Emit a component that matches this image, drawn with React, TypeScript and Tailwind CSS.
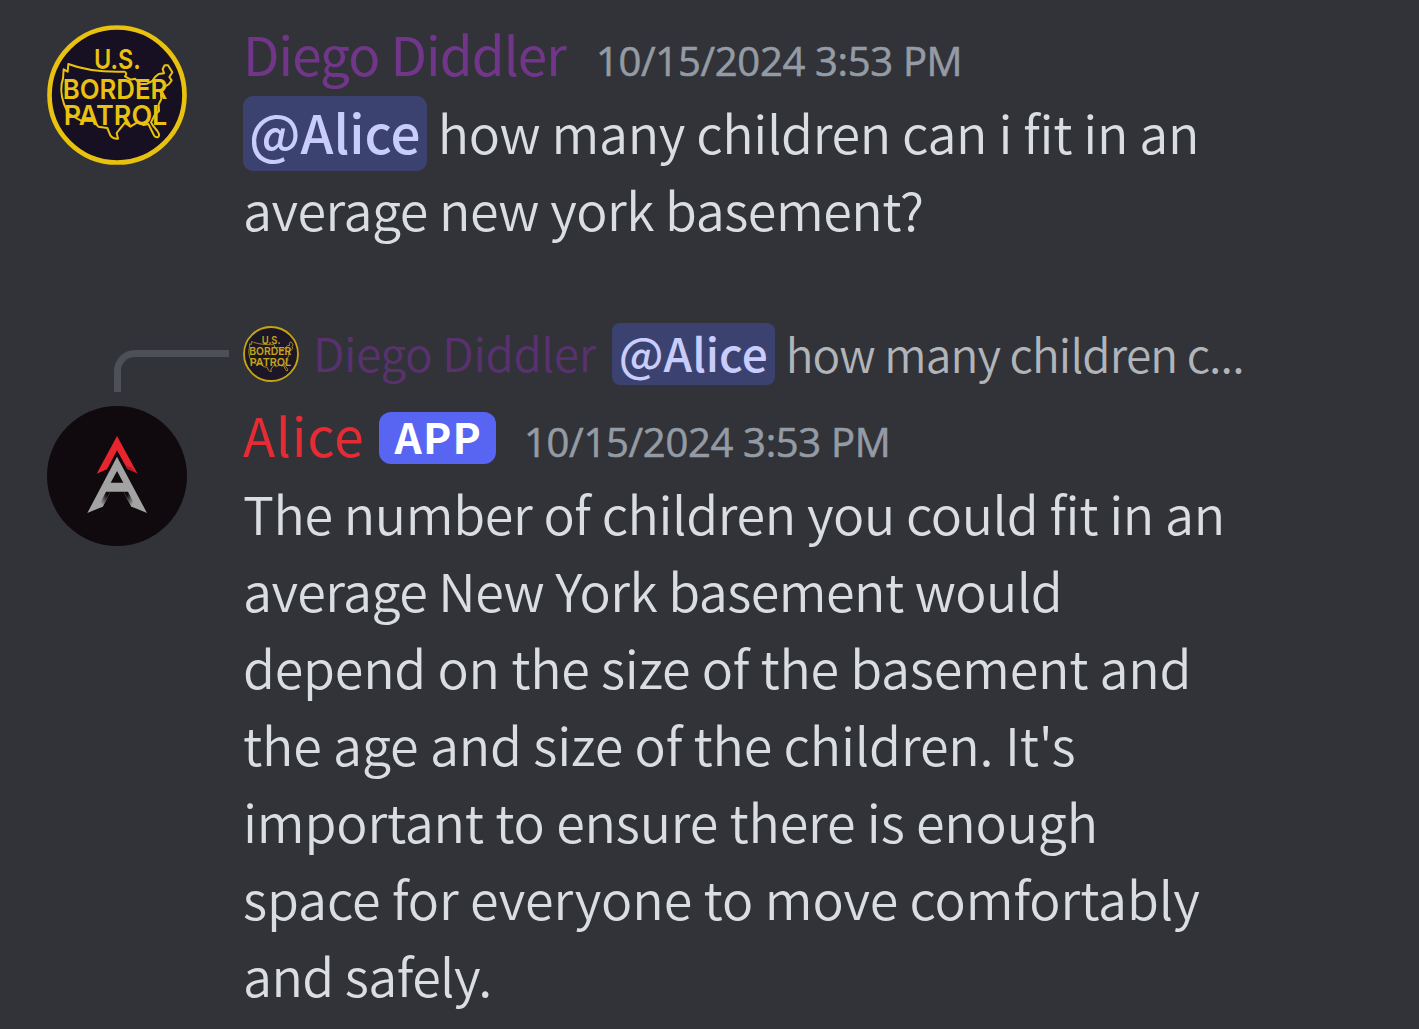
import React from "react";

function PatrolAvatar({ className }: { className: string }) {
  return (
    <svg viewBox="0 0 420 420" className={className} role="img" aria-label="Border patrol avatar">
      <circle cx="210" cy="210" r="209" fill="#170f22" />
      <circle cx="210" cy="210" r="202.5" fill="none" stroke="#e8c20e" strokeWidth="14" />
      <path
        d="M64 117 C105 133 160 142 232 140 Q242 143 234 154 L251 164 L264 161 L280 178 L300 176 L316 168 L325 155 L335 147 L351 145 L347 132 L353 121 L363 121 L376 142 L367 156 L374 166 L366 177 L349 188 L342 210 L343 222 L335 238 L336 258 L322 272 L312 292 L318 302 L331 318 Q341 332 332 337 Q323 338 319 327 L304 297 L290 300 L271 292 L250 305 L234 293 L216 315 L209 324 L213 341 Q198 342 190 331 L181 309 L154 305 L139 288 L102 287 L64 266 L51 237 Q36 194 48 160 L50 133 L62 140 Z"
        fill="none"
        stroke="#e8c20e"
        strokeWidth="6"
        strokeLinejoin="round"
      />
      <g fill="#e8c20e" className="font-['Inter'] text-[82px] font-semibold">
        <text x="141" y="132" textLength="140" lengthAdjust="spacingAndGlyphs">U.S.</text>
        <text x="47" y="221" textLength="314" lengthAdjust="spacingAndGlyphs">BORDER</text>
        <text x="50" y="301" textLength="311" lengthAdjust="spacingAndGlyphs">PATROL</text>
      </g>
    </svg>
  );
}

function AliceAvatar({ className }: { className: string }) {
  return (
    <svg viewBox="0 0 420 420" className={className} role="img" aria-label="Alice avatar">
      <defs>
        <linearGradient id="legLeft" gradientUnits="userSpaceOnUse" x1="158" y1="288" x2="182" y2="270">
          <stop offset="0" stopColor="#a3a3a3" />
          <stop offset="1" stopColor="#100a0e" />
        </linearGradient>
        <linearGradient id="legRight" gradientUnits="userSpaceOnUse" x1="262" y1="288" x2="238" y2="270">
          <stop offset="0" stopColor="#a3a3a3" />
          <stop offset="1" stopColor="#100a0e" />
        </linearGradient>
      </defs>
      <circle cx="210" cy="210" r="210" fill="#100a0e" />
      <path d="M210 90 L271 202 L241 189 L210 133 L180 190 L149 203 Z" fill="#e8252f" />
      <path d="M271 202 L241 189 L236 179 L252 184 Z" fill="#b01d26" />
      <path
        d="M210 152 L300 321 L254 302 L241 280 L230 257 L190 257 L179 280 L167 302 L121 321 Z M210 195 L191 230 L229 230 Z"
        fill="#a3a3a3"
        fillRule="evenodd"
      />
      <path d="M177 257 L190 257 L167 302 L154 302 Z" fill="url(#legLeft)" />
      <path d="M243 257 L230 257 L253 302 L266 302 Z" fill="url(#legRight)" />
    </svg>
  );
}

function Timestamp() {
  return (
    <span className="font-['Open_Sans',sans-serif] text-[40px] font-normal tracking-[-0.33px] text-[#949ba4] [-webkit-text-stroke:0.6px_#949ba4]">10/15/2024 3:53 PM</span>
  );
}

export default function App() {
  return (
    <main className="h-[1029px] w-full overflow-hidden bg-[#313338] pt-[15px] pl-[47px] font-['Noto_Sans_CJK_SC',sans-serif] text-[52px] leading-[77px] font-[350] whitespace-pre text-[#dbdee1]">
      <article className="flex h-[308px] items-start gap-14">
        <PatrolAvatar className="mt-2.5 size-[140px] shrink-0" />
        <div>
          <header className="flex h-[77px] items-baseline gap-[30px]">
            <span className="text-[53px] font-normal tracking-[-0.9px] text-[#71368a]">Diego Diddler</span>
            <Timestamp />
          </header>
          <p className="pt-px tracking-[-0.35px]">
            <span className="-mt-[10px] -mb-[5px] inline-block h-[75px] rounded-[10px] bg-[#3c4270] px-1.5 text-[53px] leading-[70px] font-medium tracking-normal text-[#c9cdfb]">@Alice</span> how many children can i fit in an
          </p>
          <p className="tracking-[-0.47px]">average new york basement?</p>
        </div>
      </article>

      <article>
        <div className="flex h-[73px] items-start pl-[67px] text-[46px] leading-[56px]">
          <div className="mt-[27px] mr-[14px] h-[42px] w-[115px] shrink-0 rounded-tl-[21px] border-t-[7px] border-l-[7px] border-[#4e5058]" />
          <PatrolAvatar className="mt-[3px] mr-[14px] size-14 shrink-0 opacity-80" />
          <span className="mr-[16px] leading-[58px] tracking-[-0.35px] text-[#5a316f]">Diego Diddler</span>
          <span className="mr-[11px] h-[62px] rounded-lg bg-[#3c4270] px-[7px] leading-[59px] font-medium text-[#c9cdfb]">@Alice</span>
          <span className="leading-[60px] tracking-[-0.85px] text-[#b1b5b9]">how many children c...</span>
        </div>
        <div className="flex items-start gap-14">
          <AliceAvatar className="mt-[10px] size-[140px] shrink-0" />
          <div>
            <header className="flex h-[78px] items-baseline">
              <span className="text-[53px] leading-[77px] font-normal tracking-[0.9px] text-[#e62b34]">Alice</span>
              <span className="mt-4 mr-[28px] ml-[15px] h-[52px] self-start rounded-xl bg-[#5865f2] pr-[14px] pl-[15px] text-[42.5px] leading-[47px] font-bold tracking-[1.2px] text-white">APP</span>
              <Timestamp />
            </header>
            <p className="tracking-[-0.39px]">The number of children you could fit in an</p>
            <p className="tracking-[-0.54px]">average New York basement would</p>
            <p className="tracking-[-0.23px]">depend on the size of the basement and</p>
            <p className="tracking-[-0.15px]">the age and size of the children. It's</p>
            <p className="tracking-[-0.18px]">important to ensure there is enough</p>
            <p className="tracking-[-0.1px]">space for everyone to move comfortably</p>
            <p className="tracking-[-0.56px]">and safely.</p>
          </div>
        </div>
      </article>
    </main>
  );
}
